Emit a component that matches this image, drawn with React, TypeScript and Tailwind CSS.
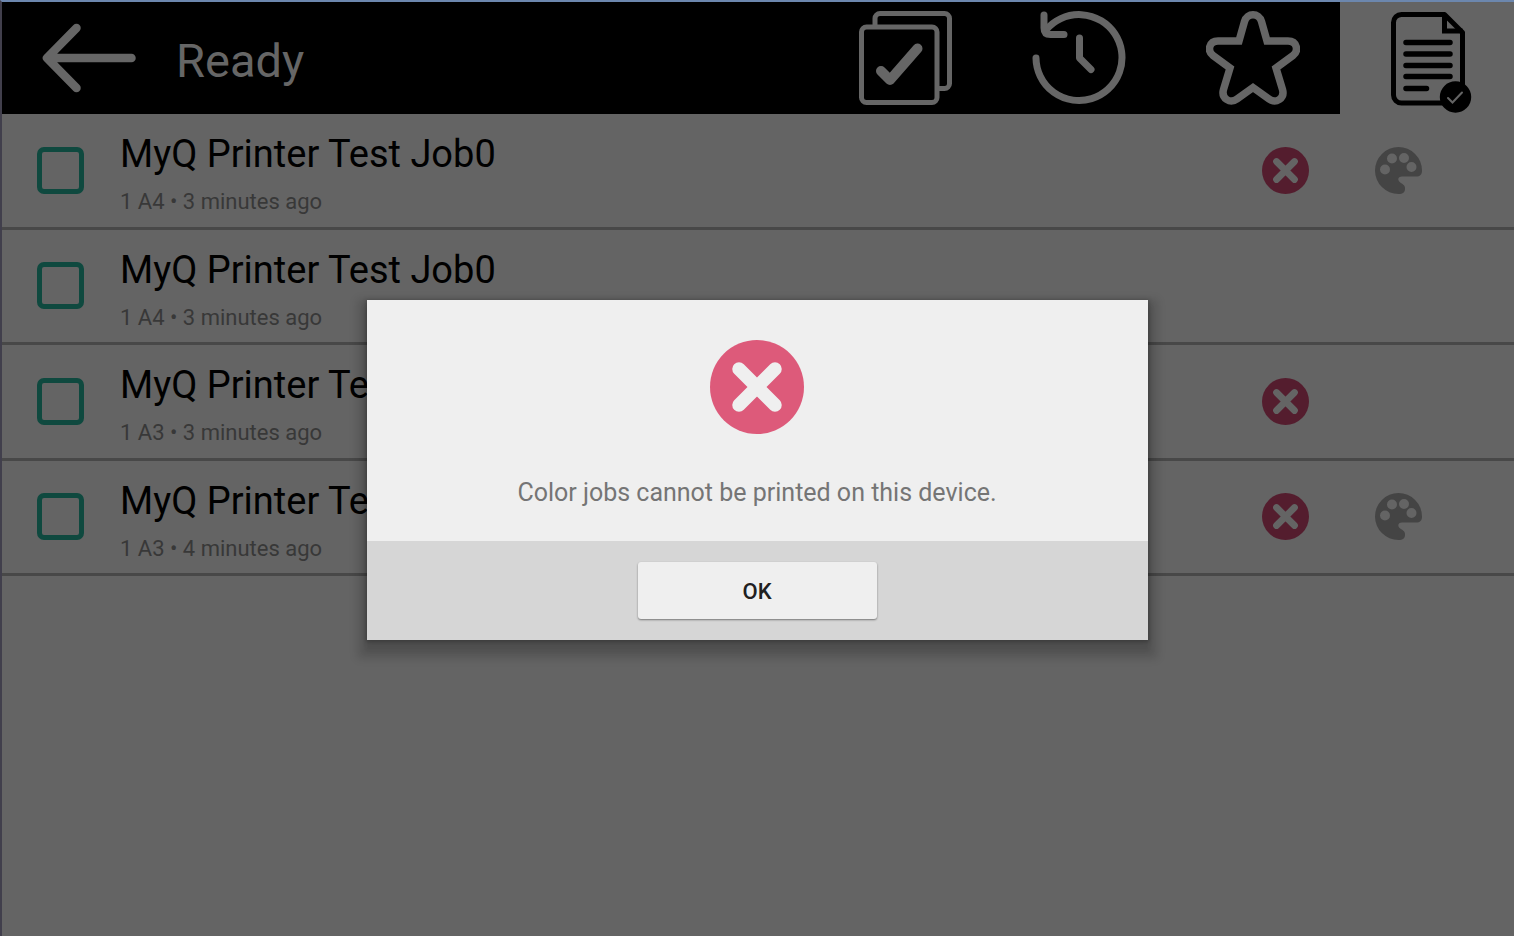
import React from "react";

type Job = { title: string; info: string; blocked: boolean; color: boolean };

const jobs: Job[] = [
  { title: "MyQ Printer Test Job0", info: "1 A4 • 3 minutes ago", blocked: true, color: true },
  { title: "MyQ Printer Test Job0", info: "1 A4 • 3 minutes ago", blocked: false, color: false },
  { title: "MyQ Printer Test Job0", info: "1 A3 • 3 minutes ago", blocked: true, color: false },
  { title: "MyQ Printer Test Job0", info: "1 A3 • 4 minutes ago", blocked: true, color: true },
];

function ArrowIcon() {
  return (
    <svg viewBox="0 0 94 94" className="size-[94px]" fill="none" stroke="currentColor" strokeWidth="8.5" strokeLinecap="round" strokeLinejoin="round">
      <path d="M89.500 47H5M34.500 17L5 47L34.500 77" />
    </svg>
  );
}

function SelectAllIcon() {
  return (
    <svg viewBox="-1 0 94 94" className="size-[94px]" fill="none" stroke="currentColor" strokeWidth="5">
      <rect x="2.500" y="16" width="75.500" height="75.500" rx="5" />
      <path d="M16 16V7.500a5 5 0 0 1 5-5H85.500a5 5 0 0 1 5 5V72.500a5 5 0 0 1-5 5H78" />
      <path d="M22 60L31 69L58.500 37.500" strokeWidth="10" strokeLinecap="round" strokeLinejoin="round" />
    </svg>
  );
}

function HistoryIcon() {
  return (
    <svg viewBox="0 0 94 94" className="size-[94px]" fill="none" stroke="currentColor" strokeWidth="7" strokeLinecap="round" strokeLinejoin="round">
      <path d="M4 47A43 43 0 1 0 14 19" />
      <path d="M12 4V17q0 6.500 6.500 6.500H32" />
      <path d="M47.500 27V47L59 58.500" />
    </svg>
  );
}

function StarIcon() {
  return (
    <svg viewBox="0 0 94 94" className="size-[94px]" fill="none" stroke="currentColor" strokeWidth="7.500">
      <path d="M61 30L55.500 10.500C53 1.500 41 1.500 38.500 10.500L33 30H12C3 30 1 40 7 44.500L24 57L17.500 78.500C15 87.500 24 93 31 88L47 76.500L63 88C70 93 79 87.500 76.500 78.500L70 57L87 44.500C93 40 91 30 82 30Z" />
    </svg>
  );
}

function ReadyIcon() {
  return (
    <svg viewBox="-10 0 94 102" className="h-[102px] w-[94px]" fill="none" stroke="currentColor" strokeWidth="5">
      <path d="M72.500 82V21.500L54.500 3.500H11.500a8 8 0 0 0-8 8V84a8 8 0 0 0 8 8H56" strokeLinejoin="round" />
      <path d="M54.500 3.500V20H72.500" />
      <path d="M16 31.500H60M16 43H60M16 54.500H60M16 65.500H60M16 77.500H36.500" strokeLinecap="round" strokeWidth="5.500" />
      <circle cx="65.500" cy="86" r="15.700" fill="currentColor" stroke="none" />
      <path d="M58 87L62.500 91.500L72 81.500" stroke="#646464" strokeWidth="2" strokeLinecap="round" />
    </svg>
  );
}

function ErrorIcon({ className }: { className: string }) {
  return (
    <svg viewBox="0 0 94 94" className={className} aria-hidden="true">
      <circle cx="47" cy="47" r="47" fill="currentColor" />
      <path d="M29 29L65 65M65 29L29 65" className="stroke-(--mark)" strokeWidth="13.500" strokeLinecap="round" />
    </svg>
  );
}

function PaletteIcon() {
  return (
    <svg viewBox="0 0 47 47" className="size-[47px] text-[#444444]" aria-hidden="true">
      <path
        fill="currentColor"
        fillRule="evenodd"
        d="M23.500 0A23.500 23.500 0 0 0 23.500 47C28 47 30 45 30 42C30 40 29.800 38.500 27.500 37C21.500 34 22.500 29.500 27 29.500H41C45 29.500 47 27.500 47 23.500A23.500 23.500 0 0 0 23.500 0ZM10 17.500a5 5 0 1 1 0 10a5 5 0 1 1 0-10ZM17 6.500a5 5 0 1 1 0 10a5 5 0 1 1 0-10ZM29 6a5 5 0 1 1 0 10a5 5 0 1 1 0-10ZM36.500 15a5 5 0 1 1 0 10a5 5 0 1 1 0-10Z"
      />
    </svg>
  );
}

const tabs = [
  { label: "Select all", icon: <SelectAllIcon />, active: false },
  { label: "History", icon: <HistoryIcon />, active: false },
  { label: "Favorites", icon: <StarIcon />, active: false },
  { label: "Ready jobs", icon: <ReadyIcon />, active: true },
];

export default function App() {
  return (
    <div className="relative flex min-h-screen flex-col border-t-2 border-l-2 border-t-[#6c87ae] border-l-[#413f4c] bg-[#646464] font-['Roboto',sans-serif] text-black">
      <header className="flex h-28 items-stretch bg-black text-[#666666]">
        <button type="button" aria-label="Back" className="ml-10 flex items-center">
          <ArrowIcon />
        </button>
        <h1 className="ml-10 flex flex-1 items-center pt-1.5 text-[47px] leading-[56px]">Ready</h1>
        <nav className="flex">
          {tabs.map((tab) => (
            <button
              key={tab.label}
              type="button"
              aria-label={tab.label}
              className={tab.active ? "flex w-[174px] justify-center bg-[#646464] pt-[9px] text-black" : "flex w-[174px] justify-center pt-[9px]"}
            >
              {tab.icon}
            </button>
          ))}
        </nav>
      </header>

      <ul className="grid min-h-[462px] auto-rows-fr">
        {jobs.map((job, i) => (
          <li key={i} className="flex items-center border-b-3 border-[#484848] pr-[92px] pl-[35px]">
            <input
              id={`job-${i}`}
              type="checkbox"
              className="size-[47px] shrink-0 appearance-none rounded-[7px] border-[5px] border-[#0f493f] checked:bg-[#0f493f]"
            />
            <label htmlFor={`job-${i}`} className="ml-9 flex-1 pt-2">
              <span className="block text-[38px] leading-[56px]">{job.title}</span>
              <span className="block text-[22px] leading-[40px] text-[#383838]">{job.info}</span>
            </label>
            <div className="grid grid-cols-[47px_47px] gap-x-[66px] [--mark:#646464]">
              <div>{job.blocked && <ErrorIcon className="size-[47px] text-[#541d2e]" />}</div>
              <div>{job.color && <PaletteIcon />}</div>
            </div>
          </li>
        ))}
      </ul>

      <div className="absolute inset-0 flex items-center justify-center pt-0.5 pr-0.5">
        <div
          role="alertdialog"
          aria-modal="true"
          aria-describedby="message"
          className="w-[781px] max-w-full bg-[#efefef] shadow-[0_1px_4px_1px_rgba(0,0,0,0.25),0_9px_8px_10px_rgba(0,0,0,0.12),0_10px_6px_2px_rgba(0,0,0,0.1)]"
        >
          <div className="flex flex-col items-center px-8 pt-10 pb-[31px] [--mark:#efefef]">
            <ErrorIcon className="size-[94px] text-[#dd5a7a]" />
            <p id="message" className="mt-[42px] text-[25px] leading-[34px] text-[#757575]">
              Color jobs cannot be printed on this device.
            </p>
          </div>
          <div className="flex justify-center bg-[#d6d6d6] pt-[21px] pb-[21px]">
            <button type="button" className="h-[57px] w-[239px] rounded-[3px] bg-[#efefef] pt-px text-[22px] font-medium text-[#202020] shadow-[0_1px_2px_rgba(0,0,0,0.45)]">
              OK
            </button>
          </div>
        </div>
      </div>
    </div>
  );
}
